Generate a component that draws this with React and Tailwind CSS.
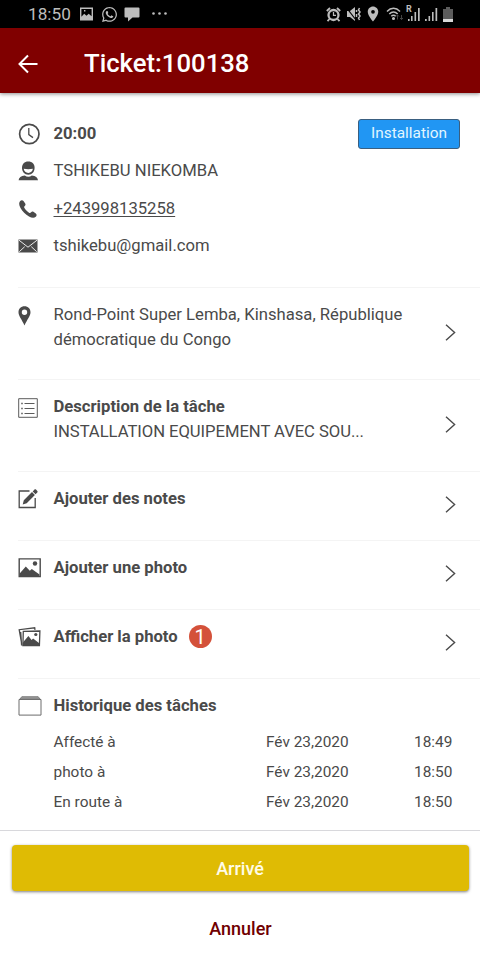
import { FaWhatsapp } from "react-icons/fa";
import { MdLocationOn } from "react-icons/md";

const history = [
  { label: "Affecté à", date: "Fév 23,2020", time: "18:49" },
  { label: "photo à", date: "Fév 23,2020", time: "18:50" },
  { label: "En route à", date: "Fév 23,2020", time: "18:50" },
];

const ClockIcon = () => (
  <svg width="22" height="22" viewBox="0 0 22 22" fill="none" stroke="currentColor">
    <circle cx="11.3" cy="11" r="9.7" strokeWidth="1.7" />
    <path d="M10.8 5v6.6l4.2 3" strokeWidth="1.3" />
  </svg>
);

const PersonIcon = () => (
  <svg width="20" height="20" viewBox="0 0 20 20" fill="currentColor" className="mb-px">
    <path d="M10.300.5c-4 0-6.300 2.700-6.300 6.200 0 3.900 2.500 7 6.300 7s6.300-3.100 6.300-7C16.600 3.200 14.300.5 10.300.5z" />
    <path d="M5.700 7.800c3.200.5 6 .5 9.200 0-.4 2.400-2.100 4.100-4.600 4.100S6.100 10.200 5.700 7.800z" fill="#fff" />
    <path d="M.6 19.300c.3-2.900 2.300-4.300 6.200-4.800 2 1.700 5 1.700 7 0 3.900.5 5.900 1.900 6.200 4.800z" />
  </svg>
);

const PhoneIcon = () => (
  <svg width="18" height="18" viewBox="0 0 18 18" fill="currentColor" className="ml-px">
    <path d="M1 1.200C2 .1 3.700 0 4.500 1.100l1.700 2.500c.6.900.3 1.700-.4 2.300-.9.800-.9 1.300-.2 2.400 1.100 1.700 2.400 3 4.100 4.100 1.100.7 1.600.7 2.400-.2.600-.7 1.500-1 2.300-.4l2.400 1.600c1.100.8 1 2.400 0 3.300-1.700 1.500-4.300 1.100-6.800-.3C6.500 14.400 3.400 11.300 1.500 8 .1 5.500-.4 2.900 1 1.200z" />
  </svg>
);

const MailIcon = () => (
  <svg width="20" height="14" viewBox="0 0 20 14" className="mb-px">
    <path d="M.5.5h19v13H.5z" fill="currentColor" />
    <path d="M1 1.200l9 7 9-7M1.300 12.700l5.400-5M18.700 12.700l-5.400-5" fill="none" stroke="#fff" strokeWidth=".9" />
  </svg>
);

const PinIcon = () => (
  <svg width="13" height="20" viewBox="0 0 13 20" fill="currentColor">
    <path fillRule="evenodd" d="M6.500.3C2.900.3.500 2.900.500 6.200c0 3.800 3.300 7.100 6 13.300 2.700-6.200 6-9.500 6-13.300 0-3.300-2.400-5.900-6-5.900zm0 3.300a2.700 2.700 0 1 1 0 5.400 2.700 2.700 0 0 1 0-5.400z" />
  </svg>
);

const ListIcon = () => (
  <svg width="20" height="20" viewBox="0 0 20 20" fill="none" stroke="currentColor">
    <path d="M.7.700h18.600v18.600H.7z" strokeWidth=".9" />
    <path d="M6.500 5.500h10M6.500 10.500h10M6.500 15.500h10" strokeWidth=".9" />
    <path d="M3.300 5.500h1.400M3.300 10.500h1.400M3.300 15.500h1.400" strokeWidth="1.400" />
  </svg>
);

const NoteIcon = () => (
  <svg width="20" height="20" viewBox="0 0 20 20">
    <path d="M11.500 2H1.200v16.500h16V9" fill="none" stroke="currentColor" strokeWidth="1.300" />
    <path d="M4.700 15.400l1.100-4.100 8.200-8.200 2.900 2.900-8.200 8.200zM14.700 2.400L16.500.600c.5-.5 1-.5 1.500 0l1.300 1.300c.5.5.5 1 0 1.500l-1.700 1.800z" fill="currentColor" />
  </svg>
);

const PhotoIcon = () => (
  <svg width="23" height="20" viewBox="0 0 23 20" fill="currentColor">
    <path d="M1.200.9h21v17.700h-21z" fill="none" stroke="currentColor" strokeWidth="1.400" />
    <circle cx="17" cy="5.500" r="2.200" />
    <path d="M1.700 18v-2.600l6.100-6.900 4 4.300 2-1.900 7.700 5.600V18z" />
  </svg>
);

const PhotosIcon = () => (
  <svg width="23" height="20" viewBox="0 0 23 20" fill="none" stroke="currentColor">
    <path d="M3.900 17.800L1.200 2.700l15.500-1.900.3 2M3.600 18.500L2.700 5" strokeWidth="1.300" />
    <path d="M5.300 4.300l16.600-.3-.5 14.700-16.500-.2z" fill="#fff" strokeWidth="1.300" />
    <circle cx="17.800" cy="7.500" r="1.600" fill="currentColor" stroke="none" />
    <path d="M4.900 18.500l.2-3.300 5.300-6.100 3.200 3.800 1.500-1.500 6.200 4.800v2.300z" fill="currentColor" stroke="none" />
  </svg>
);

const FolderIcon = () => (
  <svg width="24" height="20" viewBox="0 0 24 20" fill="none" stroke="#6c6c6c">
    <path d="M1 3.500h22v15.600H1z" />
    <path d="M1.800 3.200l2-2.500h16.400l2 2.500z" fill="#999" strokeWidth=".8" />
  </svg>
);

const Chevron = () => (
  <svg width="11" height="17" viewBox="0 0 11 17" fill="none" stroke="currentColor" strokeWidth="1.400" className="mb-0.5 shrink-0">
    <path d="M1 .8l8.600 7.700L1 16.200" />
  </svg>
);

function StatusBar() {
  return (
    <div className="flex h-7 shrink-0 items-center bg-black pl-7 pr-[27px] text-[#bdbdbd]">
      <span className="w-[51px] pt-px text-[17.2px] leading-none">18:50</span>
      <svg width="15" height="14" viewBox="0 0 15 14" className="mr-[7px]">
        <path fillRule="evenodd" d="M1 .5h13v13H1zM2.400 1.900v7.800l2.800-3 2.300 2 2.200-2 2.900 2.500V1.900zM5 3h1.400v1.400H5z" fill="currentColor" />
      </svg>
      <FaWhatsapp size={17} className="mr-1.5" />
      <svg width="16" height="15" viewBox="0 0 16 15" fill="currentColor" className="mr-3">
        <path d="M1.500.5h13q1 0 1 1v8q0 1-1 1H8.500L4 14.500v-4H1.500q-1 0-1-1v-8q0-1 1-1z" />
      </svg>
      <svg width="17" height="4" viewBox="0 0 17 4" fill="currentColor">
        <circle cx="1.500" cy="1.500" r="1.300" />
        <circle cx="7.500" cy="1.500" r="1.300" />
        <circle cx="13.500" cy="1.500" r="1.300" />
      </svg>
      <div className="ml-auto flex items-center">
        <svg width="15" height="15" viewBox="0 0 15 15" fill="none" stroke="currentColor" className="mr-[5px]">
          <circle cx="7.500" cy="8" r="5" strokeWidth="2.300" />
          <path d="M7.500 5v3.300H10" strokeWidth="1.200" />
          <path d="M.8 4L4 1M14.200 4L11 1" strokeWidth="1.800" />
          <path d="M3.500 12l-2 2.200M11.500 12l2 2.200" strokeWidth="1.800" />
        </svg>
        <svg width="16" height="16" viewBox="0 0 16 16" className="mr-0.5">
          <path d="M1 5h3l5-4v14l-5-4H1z" fill="currentColor" />
          <path d="M0 1l10 13" stroke="#000" strokeWidth="1.200" />
          <path d="M10.500 4v2M10.500 8v3M13.500 2l-1 2 1.500 2-1.500 2 1.500 2-1.500 2 1 2" fill="none" stroke="currentColor" strokeWidth="1.500" />
        </svg>
        <MdLocationOn size={18} className="mr-1" />
        <svg width="18" height="14" viewBox="0 0 18 14" fill="none" stroke="currentColor" strokeWidth="1.500" className="mr-0.5">
          <path d="M1 4.500c4-4.200 9-4.200 13 0M3.300 7c2.700-2.800 5.700-2.800 8.400 0M5.300 9.300c1.500-1.400 2.900-1.400 4.400 0" />
          <circle cx="7.500" cy="11.500" r=".8" fill="currentColor" />
          <path d="M11.500 12.500V8M10 9.500L11.500 8 13 9.500M15.500 8v4.500M14 11l1.500 1.500L17 11" stroke="#444" strokeWidth="1" />
        </svg>
        <div className="relative mr-[5px]">
          <svg width="14" height="14" viewBox="0 0 14 14" fill="currentColor">
            <path d="M2 12h1.600v2H2zM5 9h1.600v5H5zM8.500 5h1.600v9H8.500zM12 1h1.700v13H12z" />
          </svg>
          <span className="absolute -top-0.5 left-0 text-[9px] leading-none font-bold">R</span>
        </div>
        <svg width="13" height="14" viewBox="0 0 13 14" fill="currentColor" className="mr-[5px]">
          <path d="M0 12h1.700v2H0zM3.500 9h1.600v5H3.500zM7 5h1.600v9H7zM10.500 1h1.700v13h-1.700z" />
        </svg>
        <svg width="10" height="15" viewBox="0 0 10 15">
          <path d="M3 0h4v2h3v10H0V2h3z" fill="#5c5c5c" />
          <path d="M0 12h10v3H0z" fill="#d8d8d8" />
        </svg>
      </div>
    </div>
  );
}

function ContactRow({ icon, children }) {
  return (
    <div className="flex h-[37.5px] items-center">
      <span className="w-[35.5px]">{icon}</span>
      {children}
    </div>
  );
}

function Row({ icon, className, children }) {
  return (
    <section className={`ml-[18px] flex items-center border-t border-[#f4f4f4] pr-6 ${className}`}>
      <span className="w-[35.5px] shrink-0 self-start pt-[17.5px]">{icon}</span>
      <div className="grow self-start pt-[15px] leading-[24.5px]">{children}</div>
      <Chevron />
    </section>
  );
}

export default function App() {
  return (
    <div className="flex h-[960px] w-[480px] flex-col overflow-hidden bg-white font-[Roboto,sans-serif] text-[16.65px] text-[#4a4a4a]">
      <StatusBar />
      <header className="z-10 flex h-[65px] shrink-0 items-center bg-[#800000] pt-1.5 pl-[18px] text-white shadow-[0_1px_4px_rgba(0,0,0,0.45)]">
        <svg width="20" height="20" viewBox="0 0 20 20" fill="none" stroke="currentColor" strokeWidth="2">
          <path d="M19.500 10H2M10 1.500L1.500 10l8.500 8.500" />
        </svg>
        <h1 className="ml-[46px] text-[25.7px] leading-none font-medium">Ticket:100138</h1>
      </header>

      <section className="flex h-[194px] shrink-0 justify-between pt-[22px] pr-5 pl-[18px]">
        <div className="pt-[0.5px]">
          <ContactRow icon={<ClockIcon />}>
            <strong>20:00</strong>
          </ContactRow>
          <ContactRow icon={<PersonIcon />}>TSHIKEBU NIEKOMBA</ContactRow>
          <ContactRow icon={<PhoneIcon />}>
            <a className="underline underline-offset-2">+243998135258</a>
          </ContactRow>
          <ContactRow icon={<MailIcon />}>tshikebu@gmail.com</ContactRow>
        </div>
        <span className="mt-1 flex h-[30px] w-[102px] items-center justify-center rounded-[3px] border border-[#3a5f80] bg-[#2196f3] text-[15.4px] text-[#e3f6ff]">
          Installation
        </span>
      </section>

      <Row icon={<PinIcon />} className="h-[92px]">
        <p className="w-[370px]">Rond-Point Super Lemba, Kinshasa, République démocratique du Congo</p>
      </Row>
      <Row icon={<ListIcon />} className="h-[91.5px]">
        <strong>Description de la tâche</strong>
        <p className="tracking-[-0.05px]">INSTALLATION EQUIPEMENT AVEC SOU...</p>
      </Row>
      <Row icon={<NoteIcon />} className="h-[69px]">
        <strong>Ajouter des notes</strong>
      </Row>
      <Row icon={<PhotoIcon />} className="h-[69px]">
        <strong>Ajouter une photo</strong>
      </Row>
      <Row icon={<PhotosIcon />} className="h-[69px]">
        <div className="flex items-center gap-[11px]">
          <strong>Afficher la photo</strong>
          <span className="flex size-[23px] items-center justify-center rounded-full bg-[#d4513a] text-[20px] leading-none text-white">
            1
          </span>
        </div>
      </Row>

      <section className="ml-[18px] h-[152.5px] border-t border-[#f4f4f4] pt-[15px]">
        <div className="flex h-[25px] items-center">
          <span className="w-[35.5px]">
            <FolderIcon />
          </span>
          <strong>Historique des tâches</strong>
        </div>
        <div className="mt-[9px] ml-[35.5px] text-[15.4px]">
          {history.map((item) => (
            <div key={item.label} className="flex h-[30.2px] items-center">
              <span className="w-[212.5px]">{item.label}</span>
              <span className="w-[148px]">{item.date}</span>
              <span>{item.time}</span>
            </div>
          ))}
        </div>
      </section>

      <footer className="flex grow flex-col border-t border-[#d8d8dc] px-[11.5px] pt-3.5 text-[18px] font-medium">
        <button className="h-[46px] rounded-[4px] bg-[#dfbb04] text-[#fffce8] shadow-[0_1px_3px_rgba(0,0,0,0.5)]">
          Arrivé
        </button>
        <button className="mt-[14.5px] h-[46px] pl-px text-[#700000]">Annuler</button>
      </footer>
    </div>
  );
}
